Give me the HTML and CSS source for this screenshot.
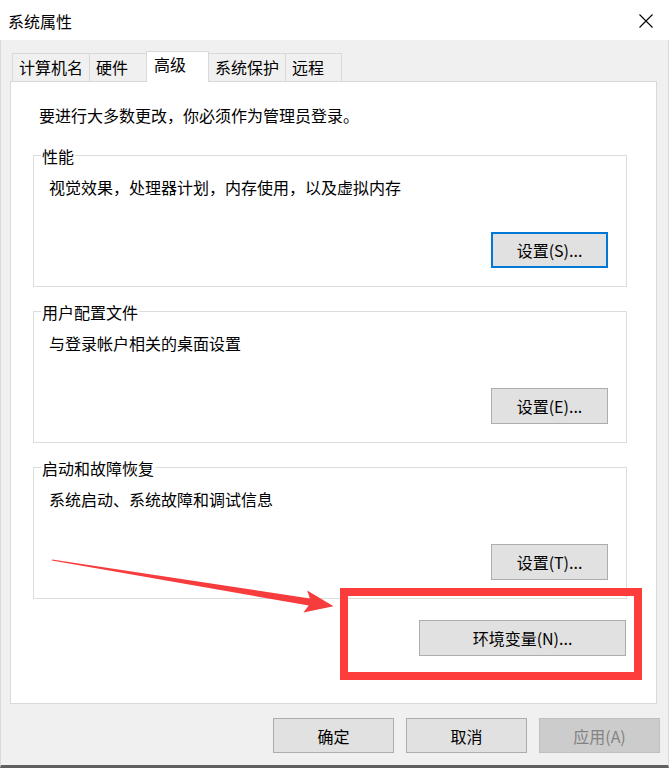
FILE: index.html
```html
<!DOCTYPE html>
<html lang="zh-CN">
<head>
<meta charset="utf-8">
<title>系统属性</title>
<link rel="stylesheet" href="styles.css">
</head>
<body>
<div class="window">
  <div class="titlebar">
    <span class="title">系统属性</span>
    <svg class="close" width="16" height="16" viewBox="0 0 16 16"><path d="M1.5 1.5 L14.5 14.5 M14.5 1.5 L1.5 14.5" stroke="#000" stroke-width="1.1" fill="none"/></svg>
  </div>
  <div class="client">
    <div class="tabs">
      <div class="tab">计算机名</div>
      <div class="tab">硬件</div>
      <div class="tab tab-active">高级</div>
      <div class="tab">系统保护</div>
      <div class="tab tab-narrow">远程</div>
    </div>
    <div class="panel">
      <p class="intro">要进行大多数更改，你必须作为管理员登录。</p>
      <div class="group">
        <div class="legend">性能</div>
        <p class="desc">视觉效果，处理器计划，内存使用，以及虚拟内存</p>
        <div class="btn-row"><button class="btn btn-focus">设置(S)...</button></div>
      </div>
      <div class="group">
        <div class="legend">用户配置文件</div>
        <p class="desc">与登录帐户相关的桌面设置</p>
        <div class="btn-row"><button class="btn">设置(E)...</button></div>
      </div>
      <div class="group">
        <div class="legend">启动和故障恢复</div>
        <p class="desc">系统启动、系统故障和调试信息</p>
        <div class="btn-row"><button class="btn">设置(T)...</button></div>
      </div>
      <div class="env-row"><button class="btn btn-env">环境变量(N)...</button></div>
    </div>
    <div class="footer">
      <button class="btn btn-foot">确定</button>
      <button class="btn btn-foot">取消</button>
      <button class="btn btn-foot btn-disabled">应用(A)</button>
    </div>
  </div>
  <div class="highlight"></div>
  <svg class="arrow" width="669" height="768" viewBox="0 0 669 768">
    <polygon points="52.1,559.4 309.9,598.4 307.2,590.4 333.5,606.2 303.4,612.6 308.7,605.6 51.9,560.6" fill="#f63c3c"/>
  </svg>
</div>
</body>
</html>
```
FILE: styles.css
```css
* { box-sizing: border-box; }
html, body { margin: 0; padding: 0; }
body {
  width: 669px;
  height: 768px;
  overflow: hidden;
  font-family: "Noto Sans CJK SC", "Noto Sans", sans-serif;
  font-size: 16px;
  color: #000;
  background: #f0f0f0;
  text-spacing-trim: space-all;
}
.window {
  position: relative;
  width: 669px;
  height: 768px;
  display: flex;
  flex-direction: column;
}
.titlebar {
  height: 40px;
  background: #fff;
  display: flex;
  align-items: center;
  justify-content: space-between;
  padding: 0 15px 0 8px;
  flex: none;
}
.title { line-height: 24px; padding-top: 1px; }
.close { display: block; margin-top: 1px; }
.client {
  flex: 1;
  background: #f0f0f0;
  border-left: 1px solid #dadada;
  border-right: 1px solid #dadada;
  border-bottom: 3px solid #5f5f5f;
  display: flex;
  flex-direction: column;
}
.tabs {
  height: 41px;
  display: flex;
  align-items: flex-end;
  padding-left: 11px;
}
.tab {
  height: 28px;
  min-width: 58px;
  padding: 0 6px;
  line-height: 26px;
  border: 1px solid #d9d9d9;
  border-bottom: none;
  background: #f0f0f0;
  white-space: nowrap;
}
.tab + .tab { margin-left: -1px; }
.tab-narrow { min-width: 57px; }
.tab-active {
  height: 31px;
  min-width: 63px;
  padding: 0 7px;
  line-height: 25px;
  background: #fff;
  margin-bottom: -1px;
  position: relative;
  z-index: 1;
}
.panel {
  height: 623px;
  margin: 0 11px 0 9px;
  background: #fff;
  border: 1px solid #d9d9d9;
  padding: 21px 0 0 28px;
}
.intro { margin: 0; line-height: 24px; }
.group {
  width: 594px;
  margin: 28px 0 0 -6px;
  height: 132px;
  border: 1px solid #dcdcdc;
  padding: 0 18px 0 14px;
}
.group + .group { margin-top: 24px; }
.legend {
  width: fit-content;
  margin: -12px 0 0 -7px;
  padding: 0 1px;
  background: #fff;
  line-height: 24px;
}
.desc { margin: 7px 0 0 1px; line-height: 24px; }
.btn-row {
  display: flex;
  justify-content: flex-end;
  margin-top: 33px;
}
.btn {
  font-family: inherit;
  font-size: 16px;
  color: #000;
  background: #e1e1e1;
  border: 1px solid #adadad;
  border-radius: 0;
  padding: 0;
  height: 36px;
  width: 117px;
  line-height: 24px;
  margin: 0;
}
.btn-focus { border: 2px solid #0078d7; }
.env-row {
  display: flex;
  justify-content: flex-end;
  margin: 21px 30px 0 0;
}
.btn-env { width: 207px; }
.footer {
  display: flex;
  justify-content: flex-end;
  gap: 12px;
  margin-top: 14px;
  padding-right: 8px;
}
.btn-foot { width: 121px; height: 35px; }
.btn-disabled {
  background: #cccccc;
  border-color: #bfbfbf;
  color: #838383;
}
.highlight {
  position: absolute;
  left: 340px;
  top: 588px;
  width: 302px;
  height: 92px;
  border: 8px solid #fd3c3c;
  pointer-events: none;
}
.arrow {
  position: absolute;
  left: 0;
  top: 0;
  pointer-events: none;
}
```
